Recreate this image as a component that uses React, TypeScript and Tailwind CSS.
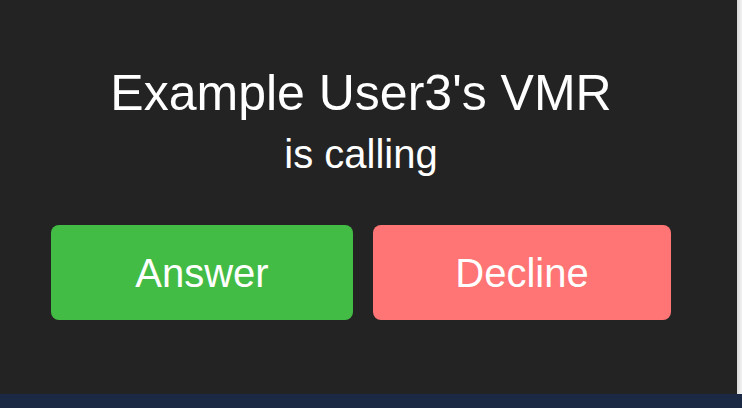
import React from "react";

export default function App() {
  return (
    <div className="w-[742px] h-[408px] flex flex-col overflow-hidden" style={{ fontFamily: '"Liberation Sans", Arial, sans-serif' }}>
      <div className="flex h-[394px]">
        <div className="w-[737px] h-full bg-[#232323] pl-[51px] pr-[66px] flex flex-col items-center">
          <div className="mt-[68px] text-[50px] leading-[50px] text-white whitespace-nowrap">Example User3's VMR</div>
          <div className="mt-[16px] text-[40px] leading-[40px] text-white whitespace-nowrap">is calling</div>
          <div className="mt-[51px] flex gap-[20px] w-full">
            <button className="w-[302px] h-[95px] rounded-[8px] bg-[#43bc46] text-white text-[40px] leading-[40px] flex items-center justify-center">Answer</button>
            <button className="w-[298px] h-[95px] rounded-[8px] bg-[#ff7474] text-white text-[40px] leading-[40px] flex items-center justify-center">Decline</button>
          </div>
        </div>
        <div className="flex-1 h-full bg-gradient-to-r from-[#d8d8d8] to-[#f3f3f3]" />
      </div>
      <div className="flex-1 bg-[#1b2944]" />
    </div>
  );
}
